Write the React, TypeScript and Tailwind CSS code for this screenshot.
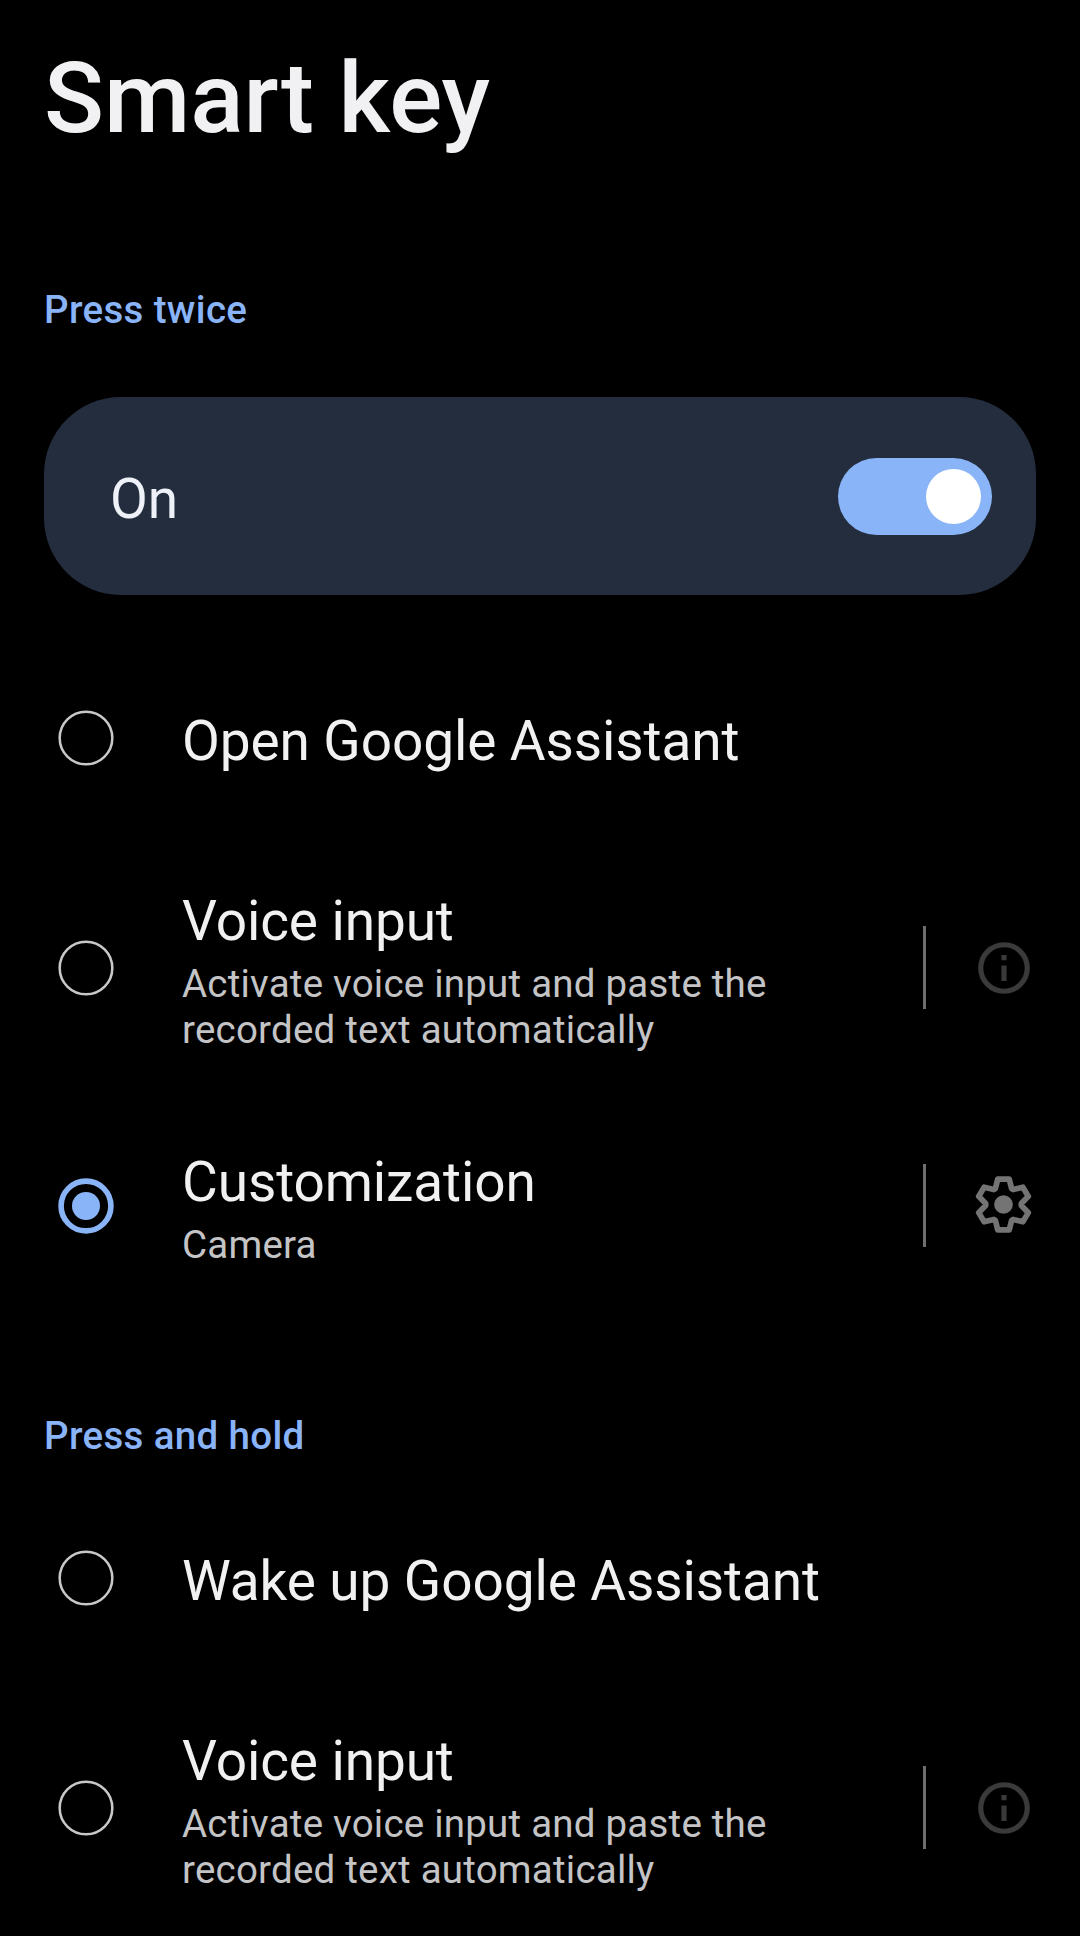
import { useState } from "react";

type Option = {
  id: string;
  title: string;
  summary?: string;
  action?: "info" | "settings";
};

type OptionRowProps = {
  option: Option;
  selected: boolean;
  onSelect: () => void;
};

const pressTwiceOptions: Option[] = [
  { id: "assistant", title: "Open Google Assistant" },
  {
    id: "voice",
    title: "Voice input",
    summary: "Activate voice input and paste the recorded text automatically",
    action: "info",
  },
  { id: "custom", title: "Customization", summary: "Camera", action: "settings" },
];

const pressHoldOptions: Option[] = [
  { id: "assistant", title: "Wake up Google Assistant" },
  {
    id: "voice",
    title: "Voice input",
    summary: "Activate voice input and paste the recorded text automatically",
    action: "info",
  },
];

const InfoIcon = () => (
  <svg viewBox="0 0 24 24" className="ml-0.5 w-[62px] h-[62px] text-[#3a3a3a]">
    <circle cx="12" cy="12" r="9" fill="none" stroke="currentColor" strokeWidth="2" />
    <path fill="currentColor" d="M11 7h2v2h-2zM11 11h2v6h-2z" />
  </svg>
);

const SettingsIcon = () => (
  <svg viewBox="0 0 56 56" className="mb-0.5 size-[57px] text-[#747474]">
    <path
      d="M20 12.4 22.4 3H33.6L36 12.4 37.5 13.3 47 11 52.4 20 45.5 27.1V28.9L52.4 36 47 45 37.5 42.7 36 43.6 33.6 53H22.4L20 43.6 18.5 42.7 9 45 3.6 36 10.5 28.9V27.1L3.6 20 9 11 18.5 13.3Z"
      fill="none"
      stroke="currentColor"
      strokeWidth="5.6"
      strokeLinejoin="round"
    />
    <circle cx="28" cy="28" r="9.2" fill="currentColor" />
  </svg>
);

const Radio = ({ selected }: { selected: boolean }) => (
  <svg viewBox="0 0 20 20" className="size-14 shrink-0" fill="none">
    {selected ? (
      <>
        <circle cx="10" cy="10" r="8.9" stroke="#8ab4f8" strokeWidth="2" />
        <circle cx="10" cy="10" r="5" fill="#8ab4f8" />
      </>
    ) : (
      <circle cx="10" cy="10" r="9.4" stroke="#c8c8c8" strokeWidth="0.9" />
    )}
  </svg>
);

const OptionRow = ({ option, selected, onSelect }: OptionRowProps) => (
  <div className="flex items-center min-h-[199px] py-[45px] pl-[58px]">
    <button
      role="radio"
      aria-checked={selected}
      onClick={onSelect}
      className="flex flex-1 items-center gap-[68px] text-left"
    >
      <Radio selected={selected} />
      <div className="w-[680px] pt-[7px]">
        <p className="text-[55px] leading-16 tracking-[-0.12px] text-[#f1f1f1]">
          {option.title}
        </p>
        {option.summary && (
          <p className="mt-2 w-[640px] text-[38.5px] leading-[46px] tracking-[0.22px] text-[#c4c4c6]">
            {option.summary}
          </p>
        )}
      </div>
    </button>

    {option.action && (
      <div className="flex items-center">
        <span className="w-[3px] h-[83px] bg-[#6e6e6e]" />
        <button className="flex w-[154px] justify-center">
          {option.action === "info" ? <InfoIcon /> : <SettingsIcon />}
        </button>
      </div>
    )}
  </div>
);

const App = () => {
  const [enabled, setEnabled] = useState(true);
  const [twice, setTwice] = useState("custom");
  const [hold, setHold] = useState("");

  return (
    <main className="w-[1080px] h-[1936px] overflow-hidden bg-black font-['Roboto',sans-serif]">
      <h1 className="px-11 pt-[38px] text-[99px] leading-[120px] font-medium text-[#f1f1f3]">
        Smart key
      </h1>

      <section>
        <h2 className="px-11 pt-[129px] text-[38.5px] leading-[46px] font-medium tracking-[0.34px] text-[#8ab4f8]">
          Press twice
        </h2>

        <div className="mx-11 mt-16 flex h-[198px] items-center justify-between rounded-[77px] bg-[#232d3d] pl-[66px] pr-11">
          <span className="pt-[5px] text-[55px] leading-16 text-[#eef1f8]">
            {enabled ? "On" : "Off"}
          </span>
          <button
            role="switch"
            aria-checked={enabled}
            onClick={() => setEnabled(!enabled)}
            className={`flex h-[77px] w-[154px] items-center rounded-full px-[11px] ${
              enabled ? "justify-end bg-[#8ab4f8]" : "justify-start bg-[#5f6368]"
            }`}
          >
            <span className="size-[55px] rounded-full bg-white" />
          </button>
        </div>

        <div className="pt-[43px]">
          {pressTwiceOptions.map((option) => (
            <OptionRow
              key={option.id}
              option={option}
              selected={twice === option.id}
              onSelect={() => setTwice(option.id)}
            />
          ))}
        </div>
      </section>

      <section>
        <h2 className="h-[165px] px-11 pt-[100px] text-[38.5px] leading-[46px] font-medium tracking-[0.34px] text-[#8ab4f8]">
          Press and hold
        </h2>
        {pressHoldOptions.map((option) => (
          <OptionRow
            key={option.id}
            option={option}
            selected={hold === option.id}
            onSelect={() => setHold(option.id)}
          />
        ))}
      </section>
    </main>
  );
};

export default App;
